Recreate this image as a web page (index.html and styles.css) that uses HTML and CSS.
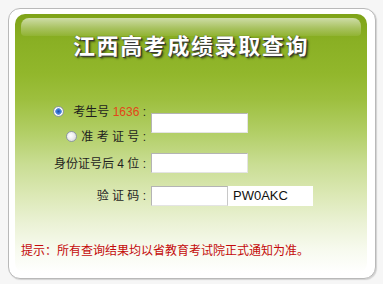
FILE: index.html
```html
<!DOCTYPE html>
<html lang="zh-CN">
<head>
<meta charset="utf-8">
<title>江西高考成绩录取查询</title>
<link rel="stylesheet" href="styles.css">
</head>
<body>
<div class="frame">
  <div class="panel">
    <h1 class="title">江西高考成绩录取查询</h1>
    <form class="form">
      <div class="lbl row1"><span class="radio on"></span><span class="txt">考生号 <em class="num">1636</em> :</span></div>
      <div class="cell rows12"><input class="field" type="text"></div>
      <div class="lbl row2"><span class="radio off"></span><span class="txt sp">准 考 证 号 :</span></div>
      <div class="lbl row3">身份证号后 4 位 :</div>
      <div class="cell row3"><input class="field" type="text"></div>
      <div class="lbl row4 sp">验 证 码 :</div>
      <div class="cell row4"><input class="field short" type="text"><span class="code">PW0AKC</span></div>
    </form>
    <p class="hint">提示：所有查询结果均以省教育考试院正式通知为准。</p>
  </div>
</div>
</body>
</html>
```
FILE: styles.css
```css
html, body {
  margin: 0;
  padding: 0;
}
body {
  background: #f6f6f6;
  font-family: "Liberation Sans", "Noto Sans CJK SC", sans-serif;
  font-size: 12px;
  color: #1e1e1e;
  width: 383px;
  height: 284px;
  overflow: hidden;
}
.frame {
  box-sizing: border-box;
  margin: 8px 0 0 8px;
  width: 368px;
  height: 271px;
  padding: 5px 8px 5px 6px;
  background: #fff;
  border: 1px solid #b9b9b9;
  border-radius: 12px;
  box-shadow: 1px 1px 1px #d2d2d2;
}
.panel {
  position: relative;
  height: 259px;
  border-radius: 10px;
  background: linear-gradient(to bottom,
    #7fa318 0px,
    #8ab024 28px,
    #92b72c 60px,
    #9dbf3e 85px,
    #b3cf68 120px,
    #c9dd93 150px,
    #dbe8b4 180px,
    #ebf2d6 210px,
    #f7faee 235px,
    #ffffff 259px);
  overflow: hidden;
}
.panel::before {
  content: "";
  position: absolute;
  top: 4px;
  left: 6px;
  right: 6px;
  height: 18px;
  border-radius: 8px 8px 4px 4px;
  background: linear-gradient(to bottom, rgba(255,255,255,0.62), rgba(255,255,255,0.3) 55%, rgba(255,255,255,0.08));
}
.title {
  position: relative;
  margin: 0;
  padding-top: 15px;
  height: 30px;
  line-height: 30px;
  text-align: center;
  font-family: "Noto Sans CJK SC", sans-serif;
  font-size: 22px;
  font-weight: 700;
  letter-spacing: 1.6px;
  color: #fff;
  text-shadow: 0 0 1px #333, 1px 1px 0 #3a3a3a, 2px 2px 2px rgba(0,0,0,0.5);
}
.form {
  margin: 40px 0 0 0;
  display: grid;
  grid-template-columns: 131px auto;
  grid-template-rows: 25px 25px 28px 38px;
  column-gap: 5px;
  align-items: center;
}
.lbl {
  grid-column: 1;
  justify-self: end;
  display: flex;
  align-items: center;
  white-space: pre;
  line-height: 16px;
}
.cell {
  grid-column: 2;
  display: flex;
  align-items: center;
}
.row1 { grid-row: 1; }
.row2 { grid-row: 2; }
.row3 { grid-row: 3; }
.row4 { grid-row: 4; }
.rows12 { grid-row: 1 / 3; align-self: center; margin-top: -2px; }
.row1 .radio { margin-right: 9px; }
.row2 .radio { margin-right: 4px; }
.row3.lbl { margin-top: 2px; }
.row4 { margin-top: -1px; }
.num {
  font-style: normal;
  color: #e2461a;
}
.radio {
  box-sizing: border-box;
  width: 11px;
  height: 11px;
  border-radius: 50%;
  border: 1px solid #8d98a4;
  background: radial-gradient(circle at 40% 40%, #ffffff 0, #f0f0f0 40%, #cfcfcf 100%);
  margin-top: -1px;
}
.radio.on {
  background: radial-gradient(circle at 50% 50%, #1f4fa8 0, #3a78d8 2px, #6a9ae0 3px, #ffffff 3.6px, #e6e6e6 80%, #c4c4c4 100%);
}
.field {
  box-sizing: border-box;
  width: 97px;
  height: 20px;
  margin: 0;
  padding: 0 3px;
  border: 1px solid;
  border-color: #b4b4b4 #e4e4e4 #e4e4e4 #b4b4b4;
  background: #fff;
  font: inherit;
}
.field.short {
  width: 77px;
  border-right-color: #c8c8c8;
}
.code {
  box-sizing: border-box;
  width: 85px;
  height: 20px;
  line-height: 20px;
  padding-left: 5px;
  background: #fff;
  font-family: "Liberation Sans", sans-serif;
  font-size: 13px;
  color: #111;
}
.hint {
  margin: 27px 0 0 6px;
  line-height: 16px;
  font-family: "Noto Sans CJK SC", sans-serif;
  font-size: 12px;
  color: #c40a0a;
}
```
